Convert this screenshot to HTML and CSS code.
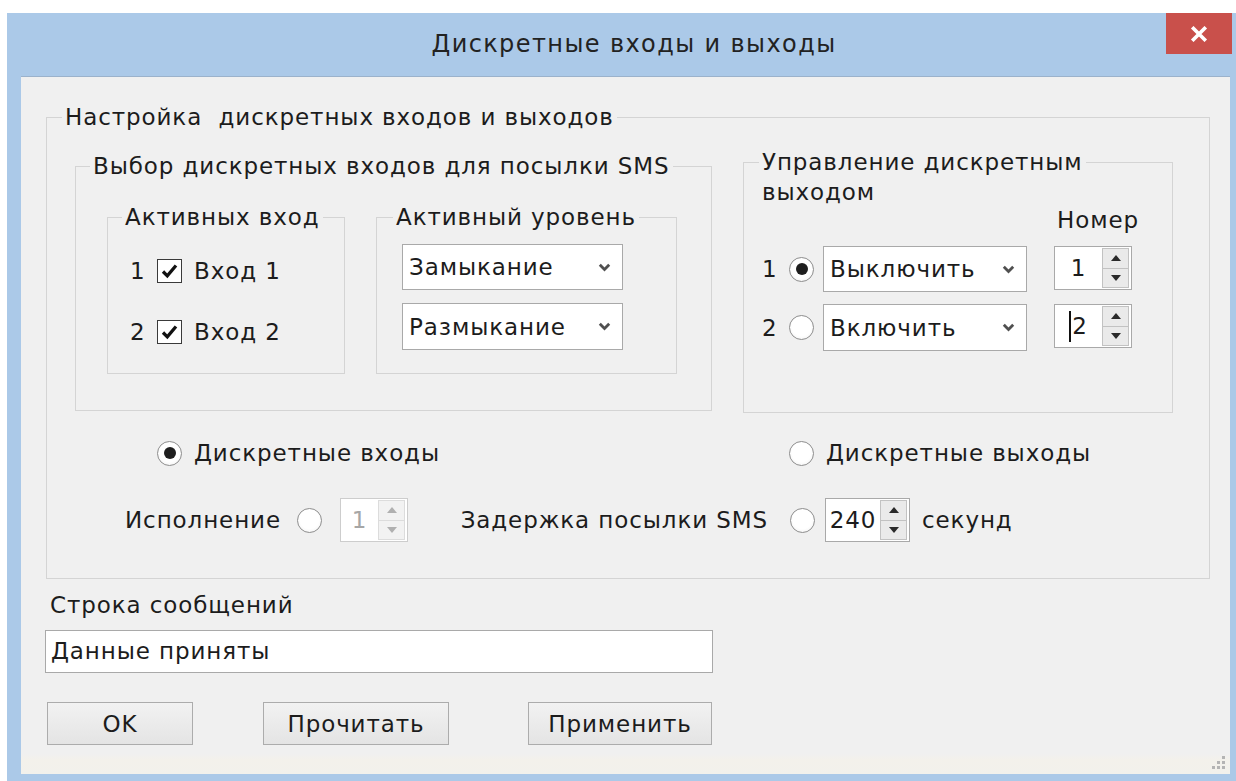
FILE: index.html
```html
<!DOCTYPE html>
<html lang="ru">
<head>
<meta charset="utf-8">
<title>Дискретные входы и выходы</title>
<link rel="stylesheet" href="styles.css">
</head>
<body>
<div class="window">
  <div class="titlebar">
    <div class="title">Дискретные входы и выходы</div>
    <button class="close" type="button" aria-label="Закрыть">
      <svg width="18" height="16" viewBox="0 0 18 16"><path d="M3.5 2.5 L14.5 13.5 M14.5 2.5 L3.5 13.5" stroke="#fff" stroke-width="3.6" stroke-linecap="square"/></svg>
    </button>
  </div>

  <div class="client">
    <fieldset class="group g-main">
      <legend>Настройка&nbsp; дискретных входов и выходов</legend>

      <div class="main-row">
        <fieldset class="group g-sms">
          <legend>Выбор дискретных входов для посылки SMS</legend>
          <div class="sms-row">
            <fieldset class="group g-active">
              <legend>Активных вход</legend>
              <div class="chk-row first">
                <span class="num">1</span>
                <span class="checkbox"><svg width="25" height="24" viewBox="0 0 25 24"><rect x="0.5" y="0.5" width="24" height="23" fill="#fff" stroke="#3a3a3a"/><path d="M6 12.5 L10.3 16.8 L19 6.5" fill="none" stroke="#111" stroke-width="3.3"/></svg></span>
                <span class="chk-text">Вход 1</span>
              </div>
              <div class="chk-row">
                <span class="num">2</span>
                <span class="checkbox"><svg width="25" height="24" viewBox="0 0 25 24"><rect x="0.5" y="0.5" width="24" height="23" fill="#fff" stroke="#3a3a3a"/><path d="M6 12.5 L10.3 16.8 L19 6.5" fill="none" stroke="#111" stroke-width="3.3"/></svg></span>
                <span class="chk-text">Вход 2</span>
              </div>
            </fieldset>

            <fieldset class="group g-level">
              <legend>Активный уровень</legend>
              <div class="level-list">
                <div class="combo c-level">
                  <span>Замыкание</span>
                  <svg class="chev" width="13" height="9" viewBox="0 0 13 9"><path d="M1.8 1.8 L6.5 6.6 L11.2 1.8" fill="none" stroke="#505050" stroke-width="2.8"/></svg>
                </div>
                <div class="combo c-level tall">
                  <span>Размыкание</span>
                  <svg class="chev" width="13" height="9" viewBox="0 0 13 9"><path d="M1.8 1.8 L6.5 6.6 L11.2 1.8" fill="none" stroke="#505050" stroke-width="2.8"/></svg>
                </div>
              </div>
            </fieldset>
          </div>
        </fieldset>

        <fieldset class="group g-out">
          <legend>Управление дискретным</legend>
          <div class="out-body">
            <div class="legend-tail">выходом</div>
            <div class="out-grid">
              <span></span><span></span><span></span>
              <span class="hdr">Номер</span>

              <span class="num">1</span>
              <span class="radio on"></span>
              <div class="combo c-out">
                <span>Выключить</span>
                <svg class="chev" width="13" height="9" viewBox="0 0 13 9"><path d="M1.8 1.8 L6.5 6.6 L11.2 1.8" fill="none" stroke="#505050" stroke-width="2.8"/></svg>
              </div>
              <div class="spin s-out">
                <span class="val">1</span>
                <span class="arrows"><span class="half"><i class="up"></i></span><span class="half"><i class="dn"></i></span></span>
              </div>

              <span class="num">2</span>
              <span class="radio"></span>
              <div class="combo c-out tall">
                <span>Включить</span>
                <svg class="chev" width="13" height="9" viewBox="0 0 13 9"><path d="M1.8 1.8 L6.5 6.6 L11.2 1.8" fill="none" stroke="#505050" stroke-width="2.8"/></svg>
              </div>
              <div class="spin s-out">
                <span class="val"><span class="caret"></span>2</span>
                <span class="arrows"><span class="half"><i class="up"></i></span><span class="half"><i class="dn"></i></span></span>
              </div>
            </div>
          </div>
        </fieldset>
      </div>

      <div class="mode-row">
        <label class="radio-label"><span class="radio on"></span><span>Дискретные входы</span></label>
        <label class="radio-label"><span class="radio"></span><span>Дискретные выходы</span></label>
      </div>

      <div class="param-row">
        <span class="p-exec">Исполнение</span>
        <span class="radio"></span>
        <div class="spin s-exec disabled">
          <span class="val">1</span>
          <span class="arrows"><span class="half"><i class="up"></i></span><span class="half"><i class="dn"></i></span></span>
        </div>
        <span class="p-delay">Задержка посылки SMS</span>
        <span class="radio"></span>
        <div class="spin s-delay">
          <span class="val">240</span>
          <span class="arrows"><span class="half"><i class="up"></i></span><span class="half"><i class="dn"></i></span></span>
        </div>
        <span class="p-unit">секунд</span>
      </div>
    </fieldset>

    <div class="msg-label">Строка сообщений</div>
    <div class="msg-box">Данные приняты</div>

    <div class="buttons">
      <button class="btn b-ok" type="button">OK</button>
      <button class="btn b-read" type="button">Прочитать</button>
      <button class="btn b-apply" type="button">Применить</button>
    </div>

    <svg class="grip" width="18" height="18" viewBox="0 0 18 18">
      <g fill="#b4b4b4">
        <rect x="13" y="3" width="3" height="3"/>
        <rect x="8" y="8" width="3" height="3"/><rect x="13" y="8" width="3" height="3"/>
        <rect x="3" y="13" width="3" height="3"/><rect x="8" y="13" width="3" height="3"/><rect x="13" y="13" width="3" height="3"/>
      </g>
    </svg>
  </div>
</div>
</body>
</html>
```

FILE: styles.css
```css
html, body {
  margin: 0;
  background: #fff;
  overflow: hidden;
}

body {
  font-family: "DejaVu Sans", "Noto Sans", sans-serif;
  font-size: 23px;
  letter-spacing: 0.9px;
  color: #1c1c1c;
}

/* window frame */
.window {
  box-sizing: border-box;
  width: 1231px;
  margin: 13px 0 0 7px;
  padding: 0 8px 8px 14px;
  background: #abc9e8;
}

.titlebar {
  display: flex;
  align-items: flex-start;
  height: 63px;
  margin: 0 -8px 0 -14px;
}

.title {
  flex: 1;
  text-align: center;
  padding-left: 95px;
  line-height: 62px;
  font-size: 24px;
  letter-spacing: 1.4px;
  color: #222;
}

.close {
  width: 66px;
  height: 41px;
  margin-right: 6px;
  padding: 0;
  border: 0;
  background: #c9504b;
  display: flex;
  align-items: center;
  justify-content: center;
}

/* dialog client area */
.client {
  position: relative;
  box-sizing: border-box;
  height: 698px;
  padding: 27px 0 0 25px;
  display: flex;
  flex-direction: column;
  align-items: flex-start;
  background: linear-gradient(to bottom, #f0f0f0 0, #f0f0f0 678px, #f3f1eb 684px, #f2f1ec 100%);
  box-shadow: inset 0 1px 0 #9bb2cb;
}

/* group boxes */
.group {
  box-sizing: border-box;
  margin: 0;
  padding: 0;
  min-width: 0;
  border: 1px solid #d4d4d4;
}

.group > legend {
  padding: 0 3px;
  height: 28px;
  line-height: 28px;
  white-space: nowrap;
}

.g-main { width: 1164px; height: 476px; }
.g-main > legend { margin-left: 15px; }

.main-row {
  display: flex;
  align-items: flex-start;
  gap: 31px;
  padding: 17px 0 0 28px;
}

.g-sms { width: 637px; height: 259px; margin-top: 4px; }
.g-sms > legend { margin-left: 14px; }

.sms-row {
  display: flex;
  align-items: flex-start;
  gap: 31px;
  padding: 23px 0 0 31px;
}

.g-active { width: 238px; height: 171px; }
.g-active > legend { margin-left: 14px; }

.chk-row {
  display: flex;
  align-items: center;
  height: 40px;
  margin-top: 21px;
  padding-left: 22px;
}
.chk-row.first { margin-top: 20px; }

.num { display: inline-block; width: 27px; }

.checkbox {
  display: flex;
  width: 25px;
  height: 24px;
  margin-right: 12px;
}

.g-level { width: 301px; height: 171px; }
.g-level > legend { margin-left: 16px; }

.level-list {
  display: flex;
  flex-direction: column;
  gap: 13px;
  padding: 13px 0 0 25px;
}

/* combo boxes */
.combo {
  box-sizing: border-box;
  display: flex;
  align-items: center;
  justify-content: space-between;
  height: 46px;
  padding: 0 11px 0 6px;
  background: #fff;
  border: 1px solid #a9a9a9;
}
.combo.tall { height: 47px; }
.c-level { width: 221px; }
.c-out { width: 204px; }
.chev { flex: none; }

/* output control group */
.g-out { width: 430px; height: 265px; }
.g-out > legend { margin-left: 15px; }

.out-body { padding-left: 18px; }

.legend-tail {
  margin-top: 2px;
  line-height: 28px;
}

.out-grid {
  display: grid;
  grid-template-columns: 27px 34px 231px 78px;
  grid-template-rows: 28px 46px 47px;
  row-gap: 12px;
  align-items: center;
}

.out-grid .hdr { padding-left: 3px; line-height: 28px; }
.out-grid .spin { align-self: start; }

/* radio buttons */
.radio {
  box-sizing: border-box;
  position: relative;
  flex: none;
  width: 25px;
  height: 25px;
  border-radius: 50%;
  border: 1px solid #8e8e8e;
  background: radial-gradient(circle at 50% 45%, #fff 55%, #ececec 100%);
}
.radio.on::after {
  content: "";
  position: absolute;
  inset: 5.5px;
  border-radius: 50%;
  background: #1e1e1e;
}

/* spin edits */
.spin {
  box-sizing: border-box;
  display: flex;
  height: 44px;
  background: #fff;
  border: 1px solid #a9a9a9;
}
.spin .val {
  flex: 1;
  display: flex;
  align-items: center;
  justify-content: center;
  line-height: 42px;
}
.spin .arrows {
  display: flex;
  flex-direction: column;
  width: 27px;
  margin: 1px 2px 1px 0;
}
.spin .half {
  flex: 1;
  display: flex;
  align-items: center;
  justify-content: center;
  background: #eaeaea;
  border: 1px solid #c2c2c2;
}
.spin .half + .half { border-top: 0; }
.spin i {
  width: 0;
  height: 0;
  border-left: 5px solid transparent;
  border-right: 5px solid transparent;
}
.spin i.up { border-bottom: 6px solid #2a2a2a; }
.spin i.dn { border-top: 6px solid #2a2a2a; }

.caret {
  display: inline-block;
  width: 0;
  height: 31px;
  border-left: 2px solid #111;
  margin-right: 1px;
}

.s-out { width: 78px; }
.s-exec { width: 68px; margin-left: 18px; }
.s-delay { width: 85px; margin-left: 10px; }

.spin.disabled { border-color: #cdcdcd; color: #a6a6a6; }
.spin.disabled .half { background: #f2f2f2; border-color: #dcdcdc; }
.spin.disabled i.up { border-bottom-color: #b0b0b0; }
.spin.disabled i.dn { border-top-color: #b0b0b0; }

/* mode and parameter rows */
.mode-row {
  display: grid;
  grid-template-columns: 632px auto;
  align-items: center;
  height: 30px;
  margin-top: 25px;
  padding-left: 110px;
}

.radio-label {
  display: flex;
  align-items: center;
  gap: 12px;
}

.param-row {
  display: flex;
  align-items: center;
  height: 44px;
  margin-top: 30px;
  padding-left: 78px;
}

.p-exec { width: 172px; }
.p-delay {
  box-sizing: border-box;
  width: 382px;
  padding-right: 22px;
  text-align: right;
}
.p-unit { margin-left: 12px; }

/* message line */
.msg-label {
  margin: 12px 0 0 4px;
  line-height: 28px;
}

.msg-box {
  box-sizing: border-box;
  width: 668px;
  height: 43px;
  margin: 11px 0 0 -1px;
  padding-left: 5px;
  line-height: 41px;
  background: #fff;
  border: 1px solid #a9a9a9;
}

/* command buttons */
.buttons {
  display: flex;
  margin-top: 29px;
}

.btn {
  box-sizing: border-box;
  height: 43px;
  padding: 0;
  font: inherit;
  letter-spacing: inherit;
  color: #1c1c1c;
  background: linear-gradient(to bottom, #f2f2f2, #e4e4e4);
  border: 1px solid #acacac;
}
.b-ok { width: 146px; margin-left: 1px; }
.b-read { width: 186px; margin-left: 70px; }
.b-apply { width: 184px; margin-left: 79px; }

.grip {
  position: absolute;
  right: 3px;
  bottom: 3px;
}
```
